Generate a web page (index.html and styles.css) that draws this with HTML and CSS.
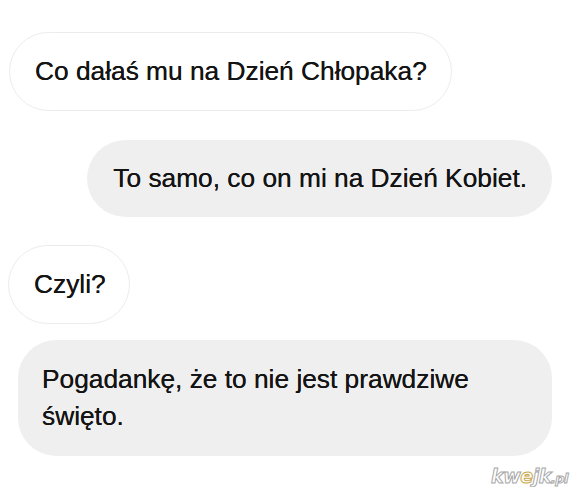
FILE: index.html
```html
<!DOCTYPE html>
<html lang="pl">
<head>
    <meta charset="UTF-8">
    <meta name="viewport" content="width=device-width, initial-scale=1.0">
    <title>Dzień Chłopaka</title>
    <link rel="stylesheet" href="styles.css">
</head>
<body>
    <div class="chat">
        <div class="bubble received first">Co dałaś mu na Dzień Chłopaka?</div>
        <div class="bubble sent">To samo, co on mi na Dzień Kobiet.</div>
        <div class="bubble received short">Czyli?</div>
        <div class="bubble received grey follow">Pogadankę, że to nie jest prawdziwe święto.</div>
    </div>
    <div class="watermark">kw<span class="e">e</span>jk<span class="dot">.pl</span></div>
</body>
</html>
```

FILE: styles.css
```css
body {
    margin: 0;
    background: #ffffff;
    font-family: 'Liberation Sans', Arial, sans-serif;
    color: #141414;
}

.chat {
    display: flex;
    flex-direction: column;
    align-items: flex-start;
    padding: 32px 20px 0 9px;
}

.bubble {
    box-sizing: border-box;
    font-size: 26.3px;
    line-height: 37px;
    padding: 20px 25px 20px 26px;
    border-radius: 40px;
    max-width: 537px;
    text-shadow: 0 0 0.4px #141414;
}

.received {
    background: #ffffff;
    border: 1px solid #ececec;
    padding: 20px 24px 20px 25px;
}

.sent {
    align-self: flex-end;
    background: #efeff0;
    margin-top: 29px;
}

.short {
    margin-top: 28px;
    margin-left: -1px;
    padding-right: 23px;
}

.grey {
    background: #efeff0;
    border: none;
    padding: 21px 24px;
    border-radius: 38px;
}

.follow {
    margin-top: 16px;
    margin-left: 9px;
}

.watermark {
    text-align: right;
    padding: 9px 4px 0 0;
    font-family: 'DejaVu Sans', sans-serif;
    font-weight: bold;
    font-style: italic;
    font-size: 19px;
    letter-spacing: -0.5px;
    color: #ffffff;
    -webkit-text-stroke: 1px #a8a8a8;
}

.watermark .e {
    -webkit-text-stroke: 1px #c9a84a;
}

.watermark .dot {
    font-size: 13px;
}
```
